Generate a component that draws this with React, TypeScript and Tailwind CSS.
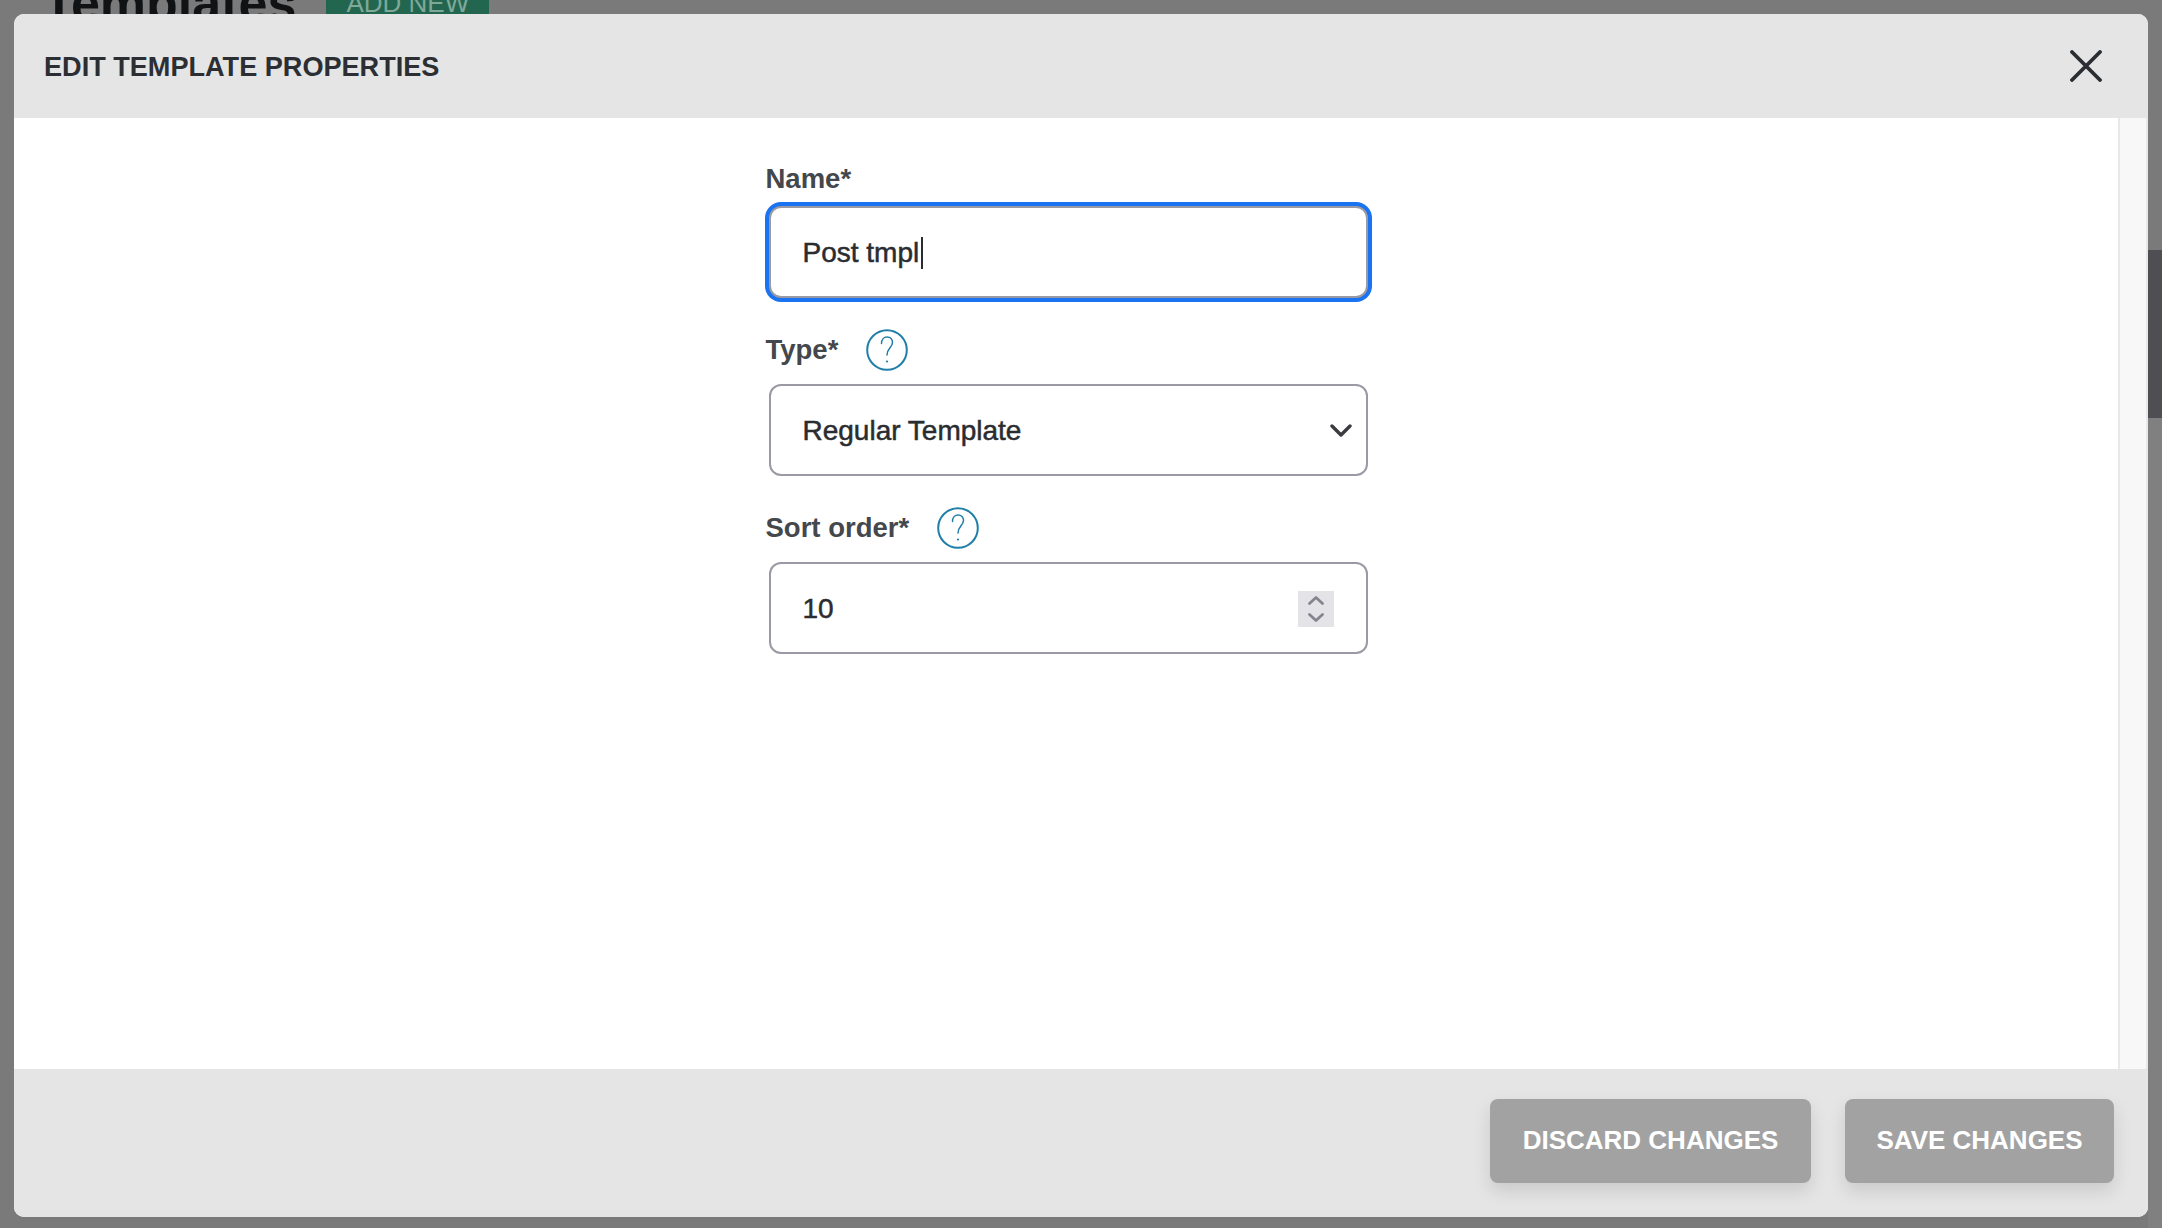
import { ReactNode } from 'react';

const FONT = "font-['Liberation_Sans',Arial,sans-serif]";

function HelpIcon() {
  return (
    <svg width="42" height="42" viewBox="0 0 42 42" fill="none" className="shrink-0">
      <circle cx="21" cy="21" r="19.8" stroke="#1f7fa8" strokeWidth="2" />
      <path d="M15.5 14.5C15.5 10.5 18 8 21 8C24.5 8 26.5 10.5 26.5 13.5C26.5 18 21 19.5 21 26" stroke="#1f7fa8" strokeWidth="1.5" strokeLinecap="round" />
      <circle cx="21" cy="32.5" r="1.1" fill="#1f7fa8" />
    </svg>
  );
}

function Label({ text, help }: { text: string; help?: boolean }) {
  return (
    <div className={`flex items-center gap-[28px] ${help ? 'h-[42px] mb-[13px] mt-[31px]' : 'h-[30px] mb-[12px]'}`}>
      <span className="text-[27.5px] leading-[30px] font-bold text-[#44474c]">{text}</span>
      {help && <HelpIcon />}
    </div>
  );
}

function Field({ children, focused }: { children: ReactNode; focused?: boolean }) {
  return (
    <div
      className={`mx-[3px] h-[92px] pt-[1px] flex items-center justify-between pl-[32px] rounded-[12px] border-2 border-[#9a9aa5] bg-white text-[28px] text-[#2a2c30] [-webkit-text-stroke:0.5px_#2a2c30] ${
        focused ? 'shadow-[0_0_0_4px_#1a73f0]' : ''
      }`}
    >
      {children}
    </div>
  );
}

function FooterButton({ text, width }: { text: string; width: string }) {
  return (
    <button className={`${width} h-[84px] pb-[2px] rounded-[8px] bg-[#a2a2a2] text-white text-[26px] font-bold shadow-[0_8px_18px_rgba(0,0,0,0.12)]`}>
      {text}
    </button>
  );
}

export default function App() {
  return (
    <div className={`relative h-screen overflow-hidden bg-[#7a7a7a] ${FONT}`}>
      {/* page behind the overlay */}
      <div className="flex items-center gap-[30px] pl-[43px] h-[70px] -mt-[32px]">
        <h1 className="text-[52px] font-bold text-[#101214]">Templates</h1>
        <div className="w-[163px] h-[70px] bg-[#22664f] text-[#7fa899] text-[26px] flex items-center justify-center">ADD NEW</div>
      </div>
      <div className="absolute right-0 top-[250px] w-[14px] h-[168px] bg-[#4e4e53]" />
      <div className="absolute right-0 top-[418px] bottom-0 w-[14px] bg-[#808080]" />

      {/* modal */}
      <div className="absolute inset-0 flex pt-[14px] pl-[14px] pr-[14px] pb-[11px]">
        <div className="flex-1 flex flex-col rounded-[10px] overflow-hidden bg-white">
          <div className="h-[104px] shrink-0 flex items-center justify-between pl-[30px] pr-[46px] pt-[2px] bg-[#e5e5e5]">
            <h2 className="text-[27.1px] font-bold text-[#2b2e33]">EDIT TEMPLATE PROPERTIES</h2>
            <svg width="32" height="32" viewBox="0 0 32 32" fill="none" className="-mt-[2px]">
              <path d="M2 2L30 30M30 2L2 30" stroke="#2a2d31" strokeWidth="3.8" strokeLinecap="round" />
            </svg>
          </div>

          <div className="flex-1 flex min-h-0">
            <div className="flex-1 flex justify-center pt-[46px] pl-[4px]">
              <form className="w-[605px]">
                <Label text="Name*" />
                <Field focused>
                  <span className="flex items-center">
                    Post tmpl<span className="w-[2px] h-[32px] ml-[2px] bg-[#2a2c30]" />
                  </span>
                </Field>

                <Label text="Type*" help />
                <Field>
                  Regular Template
                  <svg width="22" height="13" viewBox="0 0 22 13" fill="none" className="mr-[14px]">
                    <path d="M2 2L11 11L20 2" stroke="#3a3c40" strokeWidth="3.4" strokeLinecap="round" strokeLinejoin="round" />
                  </svg>
                </Field>

                <Label text="Sort order*" help />
                <Field>
                  10
                  <div className="mr-[32px] w-[36px] h-[36px] bg-[#e3e3e8] flex items-center justify-center">
                    <svg width="36" height="36" viewBox="0 0 36 36" fill="none">
                      <path d="M11.5 12.5L18 6.5L24.5 12.5M11.5 23.5L18 29.5L24.5 23.5" stroke="#85858f" strokeWidth="2.8" strokeLinecap="round" strokeLinejoin="round" />
                    </svg>
                  </div>
                </Field>
              </form>
            </div>
            {/* modal scrollbar track */}
            <div className="w-[30px] shrink-0 bg-[#f8f8f8] border-l-2 border-r-2 border-[#e8e8e8]" />
          </div>

          <div className="h-[148px] shrink-0 flex items-center justify-end gap-[34px] pr-[34px] pb-[4px] bg-[#e5e5e5]">
            <FooterButton text="DISCARD CHANGES" width="w-[321px]" />
            <FooterButton text="SAVE CHANGES" width="w-[269px]" />
          </div>
        </div>
      </div>
    </div>
  );
}
